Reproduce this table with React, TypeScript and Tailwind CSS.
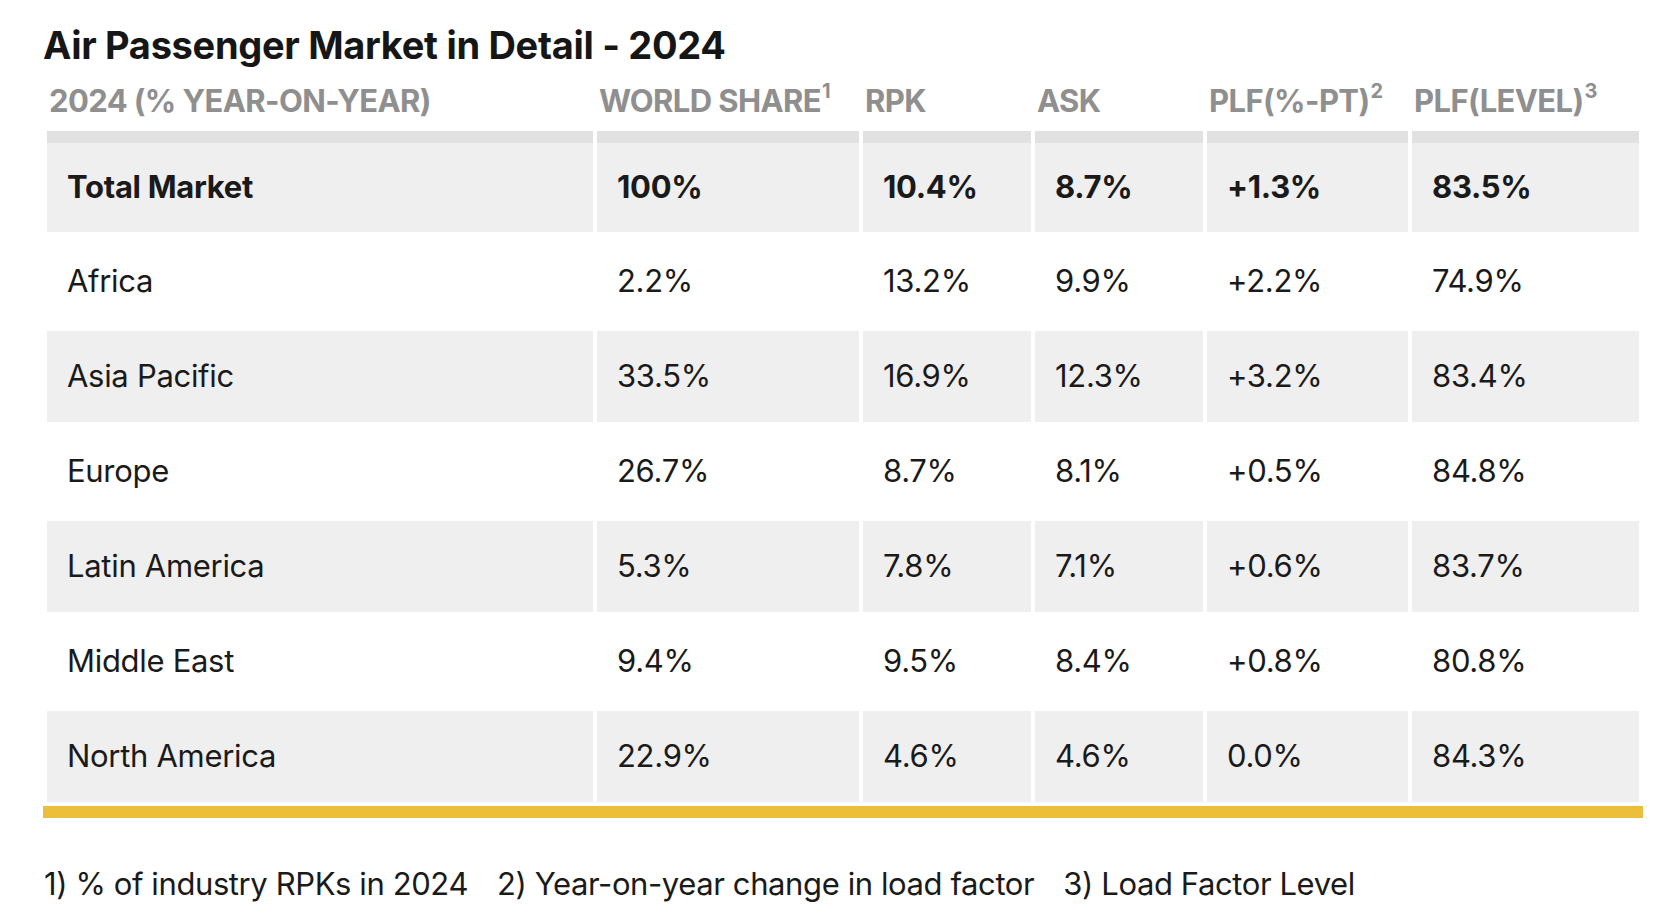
import * as React from "react";

type Row = {
  region: string;
  share: string;
  rpk: string;
  ask: string;
  plfPt: string;
  plfLevel: string;
};

const rows: Row[] = [
  { region: "Africa", share: "2.2%", rpk: "13.2%", ask: "9.9%", plfPt: "+2.2%", plfLevel: "74.9%" },
  { region: "Asia Pacific", share: "33.5%", rpk: "16.9%", ask: "12.3%", plfPt: "+3.2%", plfLevel: "83.4%" },
  { region: "Europe", share: "26.7%", rpk: "8.7%", ask: "8.1%", plfPt: "+0.5%", plfLevel: "84.8%" },
  { region: "Latin America", share: "5.3%", rpk: "7.8%", ask: "7.1%", plfPt: "+0.6%", plfLevel: "83.7%" },
  { region: "Middle East", share: "9.4%", rpk: "9.5%", ask: "8.4%", plfPt: "+0.8%", plfLevel: "80.8%" },
  { region: "North America", share: "22.9%", rpk: "4.6%", ask: "4.6%", plfPt: "0.0%", plfLevel: "84.3%" },
];

function HeadCell({ children, className }: { children: React.ReactNode; className: string }) {
  return (
    <th className={`${className} p-0 pb-[6px] pl-[2px] text-left align-bottom`}>
      <span className="block h-[40px] leading-[40px] whitespace-nowrap text-[31px] font-bold tracking-[-0.6px] text-[#8f8f8f]">
        {children}
      </span>
    </th>
  );
}

function Sup({ n }: { n: string }) {
  return <sup className="relative top-0 text-[20px] align-top leading-none ml-px">{n}</sup>;
}

function Cell({ children, gray, total }: { children: React.ReactNode; gray?: boolean; total?: boolean }) {
  return (
    <td
      className={`p-0 align-middle ${gray ? "bg-[#efefef]" : "bg-white"} ${
        total ? "border-t-[12px] border-[#e1e1e1]" : ""
      }`}
    >
      <div
        className={`flex ${total ? "h-[89px]" : "h-[91px]"} items-center pl-5 whitespace-nowrap text-[31px] tracking-[-0.3px] text-[#1a1a1a] ${
          total ? "font-bold" : "font-normal"
        }`}
      >
        {children}
      </div>
    </td>
  );
}

export default function App() {
  return (
    <div className="min-h-screen bg-white pt-[23px] font-['Inter','Liberation_Sans',sans-serif]">
      <h1 className="ml-[43px] h-[44px] leading-[44px] text-[38px] font-bold tracking-[-0.3px] text-[#161616]">
        Air Passenger Market in Detail - 2024
      </h1>

      <table className="mt-[10px] ml-[43px] w-[1600px] table-fixed border-separate border-spacing-[4px] border-b-[12px] border-[#ebbf3a]">
        <thead>
          <tr>
            <HeadCell className="w-[546px]">2024 (% YEAR-ON-YEAR)</HeadCell>
            <HeadCell className="w-[262px]">
              WORLD SHARE<Sup n="1" />
            </HeadCell>
            <HeadCell className="w-[168px]">RPK</HeadCell>
            <HeadCell className="w-[168px]">ASK</HeadCell>
            <HeadCell className="w-[201px]">
              PLF(%-PT)<Sup n="2" />
            </HeadCell>
            <HeadCell className="w-[227px]">
              PLF(LEVEL)<Sup n="3" />
            </HeadCell>
          </tr>
        </thead>
        <tbody>
          <tr>
            <Cell gray total>Total Market</Cell>
            <Cell gray total>100%</Cell>
            <Cell gray total>10.4%</Cell>
            <Cell gray total>8.7%</Cell>
            <Cell gray total>+1.3%</Cell>
            <Cell gray total>83.5%</Cell>
          </tr>
          {rows.map((r, i) => {
            const gray = i % 2 === 1;
            return (
              <tr key={r.region}>
                <Cell gray={gray}>{r.region}</Cell>
                <Cell gray={gray}>{r.share}</Cell>
                <Cell gray={gray}>{r.rpk}</Cell>
                <Cell gray={gray}>{r.ask}</Cell>
                <Cell gray={gray}>{r.plfPt}</Cell>
                <Cell gray={gray}>{r.plfLevel}</Cell>
              </tr>
            );
          })}
        </tbody>
      </table>

      {/* footnotes */}
      <div className="mt-[48px] ml-[44px] flex gap-[29px] h-[36px] leading-[36px] text-[31px] tracking-[-0.4px] text-[#1a1a1a] whitespace-nowrap">
        <span>1) % of industry RPKs in 2024</span>
        <span>2) Year-on-year change in load factor</span>
        <span>3) Load Factor Level</span>
      </div>
    </div>
  );
}
